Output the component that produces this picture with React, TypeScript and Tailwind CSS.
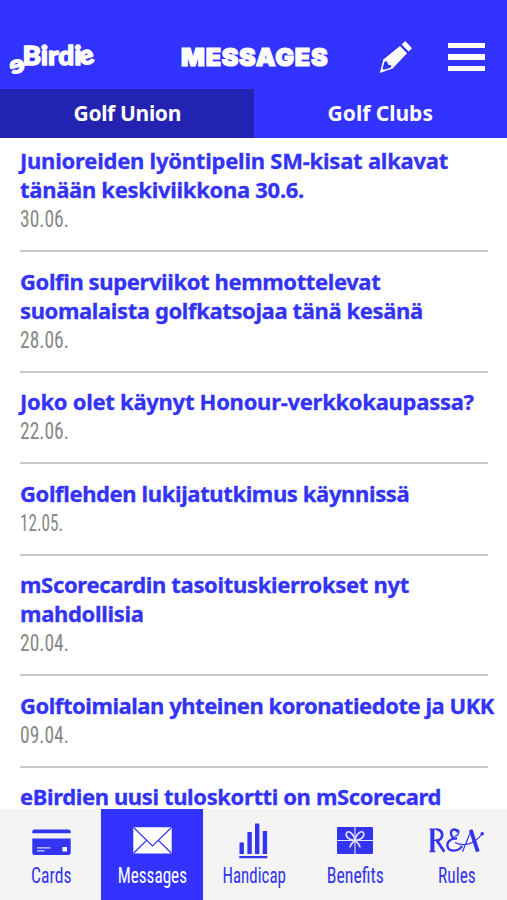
import type { ReactNode } from "react";

type Line = { text: string; tracking: string };
type Message = { title: Line[]; date?: string };

const messages: Message[] = [
  {
    title: [
      { text: "Junioreiden lyöntipelin SM-kisat alkavat", tracking: "tracking-[-0.23px]" },
      { text: "tänään keskiviikkona 30.6.", tracking: "tracking-[-0.29px]" },
    ],
    date: "30.06.",
  },
  {
    title: [
      { text: "Golfin superviikot hemmottelevat", tracking: "tracking-[-0.39px]" },
      { text: "suomalaista golfkatsojaa tänä kesänä", tracking: "tracking-[-0.38px]" },
    ],
    date: "28.06.",
  },
  {
    title: [{ text: "Joko olet käynyt Honour-verkkokaupassa?", tracking: "tracking-[-0.28px]" }],
    date: "22.06.",
  },
  {
    title: [{ text: "Golflehden lukijatutkimus käynnissä", tracking: "tracking-[-0.38px]" }],
    date: "12.05.",
  },
  {
    title: [
      { text: "mScorecardin tasoituskierrokset nyt", tracking: "tracking-[-0.33px]" },
      { text: "mahdollisia", tracking: "tracking-[-0.32px]" },
    ],
    date: "20.04.",
  },
  {
    title: [{ text: "Golftoimialan yhteinen koronatiedote ja UKK", tracking: "tracking-[-0.46px]" }],
    date: "09.04.",
  },
  {
    title: [{ text: "eBirdien uusi tuloskortti on mScorecard", tracking: "tracking-[-0.38px]" }],
  },
];

function Logo() {
  return (
    <svg width="92" height="40" viewBox="0 0 92 40" className="overflow-visible fill-white stroke-white font-['Lato',sans-serif] font-black" strokeWidth="1.4" strokeLinejoin="round">
      <text x="0" y="0" fontSize="25" transform="translate(18 32.5) rotate(-16) scale(-1.1 1)">e</text>
      <text x="14.500" y="27" fontSize="27" textLength="59" lengthAdjust="spacingAndGlyphs">Birdi</text>
      <text x="0" y="0" fontSize="27" transform="translate(73.500 28) rotate(-16)">e</text>
    </svg>
  );
}

function PencilIcon() {
  return (
    <svg width="34" height="34" viewBox="0 0 34 34" fill="none">
      <path fill="#fff" d="M26.200 1 33 8.200 29.600 11.600 22.600 4.400Z" />
      <path fill="#fff" d="M21 6 28 13.200 13.600 28.600.8 33 4.400 19.600Z" />
      <path fill="#3333ff" d="M3.400 29.300 5.400 21.800 8 21.200 9 24.600 12.400 25.400 11.800 27.400 6.500 29.500Z" />
    </svg>
  );
}

function MenuIcon() {
  return (
    <span className="flex w-[37.5px] flex-col gap-[6.3px]">
      <span className="h-[5.3px] bg-white" />
      <span className="h-[5.3px] bg-white" />
      <span className="h-[5.3px] bg-white" />
    </span>
  );
}

function CardIcon() {
  return (
    <svg width="39" height="27" viewBox="0 0 39 27" className="mt-[3px]">
      <path fill="#3333f2" d="M2.500.5h34A2.200 2.200 0 0 1 38.700 3v1.300H.3V3A2.200 2.200 0 0 1 2.500.5ZM.3 9.500h38.400v14a2.500 2.500 0 0 1-2.500 2.500H2.800A2.500 2.500 0 0 1 .3 23.500Z" />
      <path stroke="#d9d9fb" strokeWidth="1.200" d="M5 18.800h13.500M5 21.800h7.500" />
      <path fill="#fff" d="M30.500 18h4.500v4.500h-4.500z" />
    </svg>
  );
}

function EnvelopeIcon() {
  return (
    <svg width="39" height="27" viewBox="0 0 39 27">
      <rect x=".3" y=".3" width="38.400" height="26.200" rx="1" fill="#fff" />
      <path fill="none" stroke="#3333ff" strokeWidth="1.200" d="M.8.8 19.500 19 38.200.8M.8 26 13.500 13.500M38.200 26 25.500 13.500" />
    </svg>
  );
}

function ChartIcon() {
  return (
    <svg width="29" height="36" viewBox="0 0 29 36" fill="#3333f2">
      <path d="M.5 19.500h4.400V31H.5zM8.400 9h4.400v22H8.400zM16 .5h4.400V31H16zM23.700 8h4.400v23h-4.400zM.3 33.100h28v2.200H.3z" />
    </svg>
  );
}

function GiftIcon() {
  return (
    <svg width="36" height="27" viewBox="0 0 36 27">
      <rect width="36" height="27" rx="1" fill="#3333f2" />
      <g fill="none" stroke="#e6e6fc">
        <path strokeWidth="1.100" d="M0 13.500h36M18 0v27" />
        <path strokeWidth="1.600" d="M18 13C16 5.500 11 3 9.500 6s2.500 7.500 8.500 7.500C24 13.500 28 9 26.500 6S20 5.500 18 13ZM18 13.500c-2 1.500-4.500 3.500-5 7M18 13.500c2 1.500 4.500 3.500 5 7" />
      </g>
    </svg>
  );
}

function RulesIcon() {
  return (
    <svg width="56" height="27" viewBox="0 0 56 27" fill="none" stroke="#3333ee">
      <path strokeWidth="4" d="M3.400 2v22.800" />
      <path strokeWidth="1.200" d="M.5 2.100h8M.5 24.600h6M5 13.500h4" />
      <path strokeWidth="2.700" d="M7.500 2.500c7.500-.2 7.500 10.300.5 11l7.300 11.200" />
      <path strokeWidth="2.300" d="M29 5.500C27 .8 21.500 2 22 6.500c.3 3.500 3 5 6 5C21 11 17.500 15.500 18.500 19.500 20 25.300 29.500 25 33 19" />
      <path strokeWidth="1.200" d="M28.500 2.500c3 2 1 6.500-3 6.500M26 15.500c9 5 20 1 27-8.500M33.500 24.700 42.500 2.500" />
      <path strokeWidth="3.800" d="m41.800 3 7 21.700" />
      <circle cx="53.200" cy="6.800" r="1.800" fill="#3333ee" stroke="none" />
    </svg>
  );
}

type NavItem = { label: string; icon: ReactNode; scale: string; active?: boolean };

const navItems: NavItem[] = [
  { label: "Cards", icon: <CardIcon />, scale: "scale-x-[0.8]" },
  { label: "Messages", icon: <EnvelopeIcon />, scale: "scale-x-[0.78]", active: true },
  { label: "Handicap", icon: <ChartIcon />, scale: "scale-x-[0.77]" },
  { label: "Benefits", icon: <GiftIcon />, scale: "scale-x-[0.81]" },
  { label: "Rules", icon: <RulesIcon />, scale: "scale-x-[0.79]" },
];

export default function App() {
  return (
    <div className="flex h-[900px] w-[507px] flex-col overflow-hidden bg-white font-['Noto_Sans',sans-serif]">
      <header className="flex h-[89px] shrink-0 items-end bg-[#3333ff] pb-3 pl-2">
        <div className="h-[39px] w-[92px]"><Logo /></div>
        <h1 className="ml-[81px] flex-1 pb-[2px] font-['Inter',sans-serif] text-[25px] leading-[36px] font-black tracking-[0.75px] whitespace-nowrap text-white [-webkit-text-stroke:1.2px_white]">
          MESSAGES
        </h1>
        <div className="flex items-center gap-[35px] pr-[22px] pb-[3px]">
          <PencilIcon />
          <MenuIcon />
        </div>
      </header>

      <div className="grid h-[49px] shrink-0 grid-cols-2 bg-[#3333ff] text-center text-[21px] leading-8 font-bold text-white">
        <button className="bg-[#2323b2] pb-px pl-px tracking-[-0.33px]">Golf Union</button>
        <button className="pb-px">Golf Clubs</button>
      </div>

      <main className="min-h-0 flex-1 pl-5">
        {messages.map((m, i) => (
          <article key={m.title[0].text} className={i === 0 ? "pt-[8px]" : "pt-[15.5px]"}>
            <h2 className="text-[22px] leading-[29px] font-bold whitespace-nowrap text-[#3333f5] [-webkit-text-stroke:0.3px_#3333f5]">
              {m.title.map((l) => (
                <span key={l.text} className={`block ${l.tracking}`}>{l.text}</span>
              ))}
            </h2>
            {m.date && (
              <>
                <p
                  className={`w-fit origin-left pt-px font-['Roboto_Condensed',sans-serif] text-[23.5px] leading-[29px] text-[#888] ${
                    m.date === "12.05." ? "scale-x-[0.73]" : "scale-x-[0.83]"
                  }`}
                >
                  {m.date}
                </p>
                <div className="mt-4 mr-[19px] -mb-px h-[2px] bg-[#cacaca]" />
              </>
            )}
          </article>
        ))}
      </main>

      <nav className="z-10 grid h-[91px] shrink-0 grid-cols-5 bg-[#f4f4f4]">
        {navItems.map((item) => (
          <button
            key={item.label}
            className={`flex flex-col items-center pl-px ${item.active ? "bg-[#3333ff] text-white" : "text-[#3333ee]"}`}
          >
            <span className="flex h-[53px] items-center pt-[10px]">{item.icon}</span>
            <span className={`font-['Roboto_Condensed',sans-serif] text-[22px] leading-[28px] ${item.scale}`}>
              {item.label}
            </span>
          </button>
        ))}
      </nav>
    </div>
  );
}
